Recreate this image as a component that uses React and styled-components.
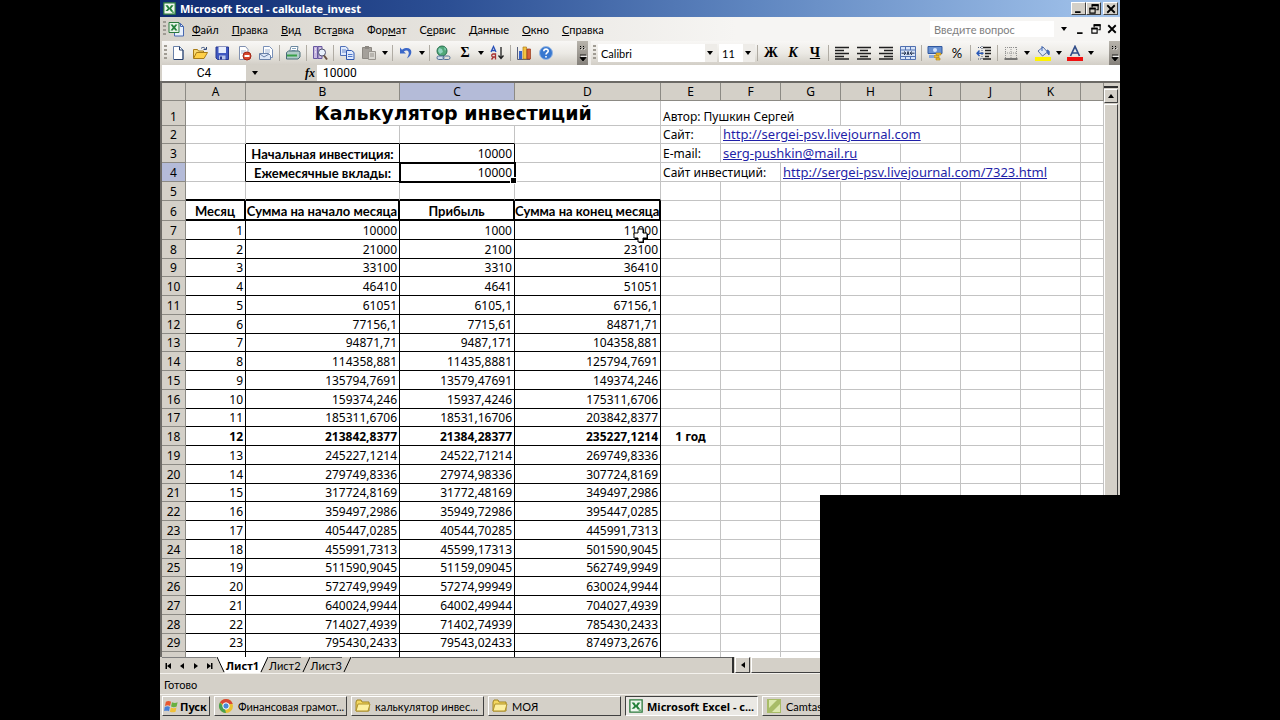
import React from 'react';
import styled, { createGlobalStyle, css } from 'styled-components';

const GlobalStyle = createGlobalStyle`
    :root {
        --face: #d4d0c8;
        --grid: #c3c3c3;
        --ui-font: Lato, 'Noto Sans', sans-serif;
        --cell-font: 'Noto Sans', 'Open Sans', sans-serif;
    }
    * {
        box-sizing: border-box;
    }
    body {
        margin: 0;
        background: #000;
        color: #000;
        font-family: var(--ui-font);
        font-size: 11px;
    }
    button,
    input,
    select {
        margin: 0;
        padding: 0;
        border: none;
        border-radius: 0;
        background: none;
        color: inherit;
        font: inherit;
    }
    svg {
        display: block;
        flex: none;
    }
`;

const raised = css`
    border: 1px solid;
    border-color: #fff #404040 #404040 #fff;
    background: var(--face);
`;

const strong = css`
    font-family: var(--cell-font);
    font-weight: bold;
`;

const Stage = styled.div`
    display: flex;
    justify-content: center;
    height: 100vh;
    overflow: hidden;
`;

const Desktop = styled.main`
    position: relative;
    display: flex;
    flex-direction: column;
    width: 75%;
    height: 100%;
    background: var(--face);
    overflow: hidden;
`;

const TitleBar = styled.header`
    display: flex;
    align-items: center;
    gap: 4px;
    height: 17px;
    padding: 0 2px 0 3px;
    background: linear-gradient(to right, #0e2a70, #2c4f94 30%, #5f86c0 62%, #a3c4ec);
    color: #fff;

    h1 {
        ${strong}
        flex: 1;
        margin: 0;
        font-size: 11px;
        white-space: nowrap;
    }
`;

const WindowButtons = styled.div`
    display: flex;

    button {
        ${raised}
        display: flex;
        align-items: center;
        justify-content: center;
        width: 15px;
        height: 13px;
    }
    button:last-child {
        margin-left: 2px;
    }
`;

const MenuBar = styled.nav`
    display: flex;
    align-items: center;
    gap: 13px;
    height: 24px;
    padding: 0 2px 0 3px;
    background: linear-gradient(to right, #d6d2ca, #f6f5f3 60%);

    & > button {
        white-space: nowrap;
    }
`;

const MenuIcon = styled.div`
    display: flex;
    align-items: center;
    gap: 2px;
    margin-right: -5px;
`;

const Handle = styled.span`
    flex: none;
    width: 3px;
    height: 16px;
    background: repeating-linear-gradient(to bottom, #a09c94 0 2px, transparent 2px 4px);
`;

const Question = styled.div`
    display: flex;
    align-items: center;
    gap: 4px;
    margin-left: auto;

    input {
        width: 124px;
        height: 16px;
        padding-left: 4px;
        background: #fff;
    }
    input::placeholder {
        color: #808080;
        opacity: 1;
    }
    button {
        display: flex;
        align-items: center;
        justify-content: center;
        width: 12px;
        height: 16px;
    }
`;

const Toolbars = styled.div`
    display: flex;
    height: 24px;
    background: linear-gradient(to right, #d6d2ca, #f6f5f3 60%);
`;

const Toolbar = styled.div`
    display: flex;
    align-items: center;
    flex: ${(props) => (props.$grow ? '1' : '0 0 426px')};
    margin-left: ${(props) => (props.$grow ? '3px' : '2px')};
    padding-left: 2px;
    background: linear-gradient(to bottom, #f8f7f5, #eceae5 50%, #d2cec6);
`;

const Tool = styled.button`
    display: flex;
    align-items: center;
    justify-content: center;
    flex: none;
    width: ${(props) => (props.$narrow ? '10px' : '22px')};
    height: 22px;
    font-family: ${(props) => (props.$serif ? "'Liberation Serif', serif" : 'inherit')};
    font-size: ${(props) => (props.$serif ? '14px' : '13px')};
    font-weight: ${(props) => (props.$serif ? 'bold' : 'normal')};
    font-style: ${(props) => (props.$italic ? 'italic' : 'normal')};
    text-decoration: ${(props) => (props.$underline ? 'underline' : 'none')};
`;

const Divider = styled.span`
    flex: none;
    width: 1px;
    height: 16px;
    margin: 0 2px;
    background: #b0aca4;
`;

const Overflow = styled.button`
    display: flex;
    align-items: center;
    justify-content: center;
    align-self: stretch;
    width: 11px;
    margin-left: auto;
    background: linear-gradient(to bottom, #b8b4ac, #84807a);
`;

const Combo = styled.label`
    display: flex;
    align-items: center;
    flex: none;
    width: ${(props) => (props.$small ? '36px' : '119px')};
    height: 18px;
    margin-left: 2px;
    padding-right: 3px;
    background: linear-gradient(to right, #fff calc(100% - 12px), #eeece8 0);

    select {
        flex: 1;
        min-width: 0;
        padding-left: 3px;
        appearance: none;
    }
`;

const FormulaBar = styled.div`
    display: flex;
    height: 18px;
    padding-left: 2px;
    border-bottom: 2px solid #6c6a66;

    input {
        background: #fff;
        font-family: Roboto, sans-serif;
        font-size: 12px;
    }
    input:first-child {
        width: 84px;
        text-align: center;
    }
    input:last-child {
        flex: 1;
        padding-left: 6px;
    }
    button {
        display: flex;
        align-items: center;
        width: 71px;
        padding: 0 2px 0 5px;
        justify-content: space-between;
    }
    i {
        font: italic bold 12px 'Liberation Serif', serif;
    }
`;

const Workspace = styled.section`
    display: flex;
    flex: 1;
    min-height: 0;
    padding-right: 2px;
    border-left: 2px solid #6c6a66;
`;

const SheetArea = styled.div`
    flex: 1;
    min-width: 0;
    overflow: hidden;
    background: #fff;
`;

const Sheet = styled.table`
    width: 100%;
    table-layout: fixed;
    border-collapse: separate;
    border-spacing: 0;
    font-family: var(--cell-font);
    font-size: 12px;
    line-height: 16px;

    col:nth-child(1) {
        width: 24px;
    }
    col:nth-child(3) {
        width: 154px;
    }
    col:nth-child(4) {
        width: 115px;
    }
    col:nth-child(5) {
        width: 146px;
    }
    col {
        width: 60px;
    }
    col:last-child {
        width: auto;
    }
`;

const Row = styled.tr`
    height: ${(props) => props.$height || 19}px;
`;

const HeadCell = styled.th`
    padding: 0;
    border-right: 1px solid #8c8a84;
    border-bottom: 1px solid #8c8a84;
    background: ${(props) => (props.$current ? '#b4bbd8' : 'var(--face)')};
    font-weight: normal;
    vertical-align: bottom;
    white-space: nowrap;
`;

const Cell = styled.td`
    position: relative;
    padding: 0 2px;
    border-right: 1px solid var(--grid);
    border-bottom: 1px solid var(--grid);
    text-align: ${(props) => props.$align || 'left'};
    vertical-align: bottom;
    font-weight: ${(props) => (props.$bold ? 'bold' : 'normal')};
    white-space: nowrap;

    ${(props) =>
        props.$lines &&
        css`
            border-right-color: ${props.$lines.includes('r') ? '#000' : 'var(--grid)'};
            border-bottom-color: ${props.$lines.includes('b') ? '#000' : 'var(--grid)'};
        `}
    ${(props) =>
        props.$heavy &&
        css`
            border-bottom: 2px solid #000;
        `}
    ${(props) =>
        props.$current &&
        css`
            z-index: 1;
            outline: 2px solid #000;
            outline-offset: -1px;

            &:after {
                content: '';
                position: absolute;
                right: -3px;
                bottom: -3px;
                width: 5px;
                height: 5px;
                border: 1px solid #fff;
                background: #000;
            }
        `}

    a {
        color: #1f1fa8;
        font-size: 13px;
    }
`;

const Title = styled(Cell)`
    font-family: 'DejaVu Sans', sans-serif;
    font-size: 19px;
    line-height: 24px;
    font-weight: bold;
    text-align: center;
`;

const LabelCell = styled(Cell)`
    padding: 0;
    font-family: Lato, 'Noto Sans', sans-serif;
    font-size: 13px;
    font-weight: bold;
    text-align: center;
`;

const HeadingCell = styled(LabelCell)`
    border-right: 2px solid #000;
    border-bottom: 2px solid #000;
`;

const Pointer = styled.svg`
    position: absolute;
    top: 6px;
    right: 10px;
    z-index: 2;
`;

const VScroll = styled.div`
    display: flex;
    flex-direction: column;
    width: 14px;
    padding-top: 3px;

    span {
        height: 3px;
        border-top: 2px solid #303030;
    }
    button {
        ${raised}
        display: flex;
        align-items: center;
        justify-content: center;
        height: 14px;
    }
    button:last-child {
        flex: 1;
        margin-top: 1px;
    }
`;

const TabStrip = styled.nav`
    display: flex;
    height: 17px;
    padding-left: 2px;
    border-bottom: 1px solid #f4f2ee;
`;

const TabNav = styled.div`
    display: flex;
    width: 54px;
    border-top: 1px solid #808080;

    button {
        display: flex;
        flex: 1;
        align-items: center;
        justify-content: center;
    }
`;

const Tab = styled.button`
    padding: 0;
    border-top: 1px solid ${(props) => (props.$active ? '#fff' : '#606060')};
    background: ${(props) => (props.$active ? '#fff' : 'var(--face)')};
    ${(props) => props.$active && strong}
`;

const TabFill = styled.div`
    flex: 1;
    border-top: 1px solid #606060;
`;

const HScroll = styled.div`
    display: flex;
    width: 388px;
    padding-left: 1px;
    border-left: 2px solid #303030;

    button {
        ${raised}
        display: flex;
        align-items: center;
        justify-content: center;
        width: 15px;
    }
    button:last-child {
        flex: 1;
        margin-left: 1px;
    }
`;

const StatusBar = styled.footer`
    display: flex;
    align-items: center;
    height: 20px;
    padding-left: 4px;
`;

const Taskbar = styled.footer`
    display: flex;
    gap: 4px;
    height: 26px;
    padding: 1px 2px 4px;
    border-top: 1px solid #f4f2ee;
`;

const TaskButton = styled.button`
    ${raised}
    display: flex;
    align-items: center;
    gap: 4px;
    flex: none;
    width: 133px;
    padding: 0 2px 0 3px;
    white-space: nowrap;

    ${(props) =>
        props.$active &&
        css`
            ${strong}
            border-color: #404040 #fff #fff #404040;
            background: #eae8e4;
        `}
`;

const StartButton = styled(TaskButton)`
    ${strong}
    width: 48px;
    padding: 0 0 0 1px;
    gap: 1px;
`;

const Camera = styled.div`
    position: absolute;
    right: 0;
    bottom: 0;
    z-index: 5;
    width: 31.25%;
    height: 31.25%;
    background: #000;
`;

const Icon = ({ size = 16, children }) => (
    <svg width={size} height={size} viewBox="0 0 16 16" fill="none" aria-hidden="true">
        {children}
    </svg>
);

const Arrow = ({ dir = 'down', bar }) => {
    const turn = { down: 0, left: 90, up: 180, right: -90 }[dir];
    return (
        <svg width="8" height="8" viewBox="0 0 8 8" aria-hidden="true">
            <g transform={`rotate(${turn} 4 4)`}>
                <path d="M1 2h6L4 6z" fill="#000" />
                {bar && <path d="M1 6h6v1.500H1z" fill="#000" />}
            </g>
        </svg>
    );
};

const More = () => (
    <svg width="9" height="22" viewBox="0 0 9 22" aria-hidden="true">
        <path d="M2 4l1.500 1.500L2 7M5 4l1.500 1.500L5 7" fill="none" stroke="#000" />
        <path d="M3 5l1.500 1.500L3 8M6 5l1.500 1.500L6 8" fill="none" stroke="#fff" strokeWidth=".5" />
        <path d="M2 13h6M2 15.500h6l-3 3.500z" fill="#000" stroke="#000" strokeWidth=".8" />
        <path d="M3 14.300h6" stroke="#fff" />
    </svg>
);

const ExcelIcon = ({ size = 13 }) => (
    <Icon size={size}>
        <path d="M1 1h14v14H1z" fill="#eef6ee" stroke="#2c7a3c" strokeWidth="1.500" />
        <path d="M3 4h3l2 3 2-3h3l-3 4 3 4h-3L8 9l-2 2H3l3-3z" fill="#23803a" />
        <path d="M11 12h3v2h-3z" fill="#66ab72" />
    </Icon>
);

const WorkbookIcon = () => (
    <Icon>
        <path d="M6.500 2.500h6l3 3v9.500h-9z" fill="#e8f0fc" stroke="#4868b0" />
        <path d="M12.500 2.500v3h3" stroke="#4868b0" />
        <path d="M1 1.500h10v10H1z" fill="#e8f4e8" stroke="#2c7a3c" />
        <path d="M2.500 3.500h2.300L6 5.200l1.200-1.700h2.300L7.200 6.500l2.300 3H7.200L6 7.800 4.800 9.500H2.500l2.300-3z" fill="#23803a" />
    </Icon>
);

const Minimize = () => (
    <Icon size={11}>
        <path d="M3 12h8v2.500H3z" fill="#000" />
    </Icon>
);

const Restore = () => (
    <Icon size={12}>
        <path d="M5.500 6V2.500h8V9H11" stroke="#000" strokeWidth="1.500" />
        <path d="M5 3h9M2 7.500h8" stroke="#000" strokeWidth="2.500" />
        <path d="M2.500 7h7v6.500h-7z" stroke="#000" strokeWidth="1.500" />
    </Icon>
);

const Close = () => (
    <Icon size={12}>
        <path d="M3 3l10 10M13 3L3 13" stroke="#000" strokeWidth="2.400" />
    </Icon>
);

const Folder = () => (
    <Icon>
        <path d="M1 4l1-2h4l1 2h7v9H1z" fill="#f4d860" stroke="#a08420" />
        <path d="M3 6h12l-2 7H1z" fill="#fdf0a0" stroke="#b0922a" />
    </Icon>
);

const icons = {
    create: (
        <Icon>
            <path d="M3.500 1.500h6l3.500 3.500v9.500H3.500z" fill="#fff" stroke="#6880a8" />
            <path d="M9.500 1.500V5H13M13 5v9.500H4" stroke="#28406c" />
        </Icon>
    ),
    open: (
        <Icon>
            <path d="M1.500 13V4.500h4l1 1.500h5v3" fill="#f8d870" stroke="#a87c18" />
            <path d="M1.500 13.500l3-6h11l-3.500 6z" fill="#ffd048" stroke="#a87c18" />
            <path d="M9 3.500c2-2 4-1 4.500 1M11.500 4.500h3V2" stroke="#304878" />
        </Icon>
    ),
    save: (
        <Icon>
            <path d="M2 2h12.500v12.500H3.500L2 13z" fill="#4058c0" stroke="#283890" />
            <path d="M4.500 2h7.500v6H4.500z" fill="#e8eefc" />
            <path d="M5 10.500h6.500v4H5z" fill="#b8c4e8" />
            <path d="M6 11.500h2v3H6z" fill="#283890" />
        </Icon>
    ),
    permission: (
        <Icon>
            <path d="M3.500 1.500h6L12 4.500v10H3.500z" fill="#fff" stroke="#8090b0" />
            <path d="M5 6h5M5 8h3" stroke="#a0b0cc" />
            <circle cx="11" cy="11" r="4" fill="#d8452c" stroke="#a02818" />
            <path d="M8.500 11h5" stroke="#fff" strokeWidth="2" />
        </Icon>
    ),
    mail: (
        <Icon>
            <path d="M5.500 1.500h6l3 3v8h-9z" fill="#fff" stroke="#7890b8" />
            <path d="M7 5h5M7 7h5" stroke="#a0b4d4" />
            <path d="M1.500 8.500h9l2 2v4h-11z" fill="#dce6f6" stroke="#6880a8" />
            <path d="M2 9l4 3 5-3" stroke="#6880a8" />
        </Icon>
    ),
    print: (
        <Icon>
            <path d="M4.500 7l1.500-5.500h7L12 7z" fill="#fff" stroke="#6c88a0" />
            <path d="M7 3.500h4M6.500 5.500h4" stroke="#88a8c0" />
            <path d="M1.500 7.500l2-1.500H14l1 1.500V12l-2 2H1.500z" fill="#b0ccc8" stroke="#486c78" />
            <path d="M2 10.500h10" stroke="#38a048" strokeWidth="2" />
        </Icon>
    ),
    research: (
        <Icon>
            <path d="M1.500 1.500h4v12h-4zM6 1.500h4v12H6z" fill="#c8b8e0" stroke="#6858a0" />
            <path d="M3 4h1M3 7h1M7.500 4h1" stroke="#fff" />
            <circle cx="10" cy="7.500" r="3.500" fill="#e8f0fc" stroke="#505070" />
            <path d="M12 10.500l3 4" stroke="#685040" strokeWidth="2" />
        </Icon>
    ),
    copy: (
        <Icon>
            <path d="M1.500 1.500h5l2.500 2v7H1.500z" fill="#e0eafc" stroke="#5070b8" />
            <path d="M3 5h4M3 7h4" stroke="#6888cc" />
            <path d="M7.500 5.500h5l2.500 2v7H7.500z" fill="#e0eafc" stroke="#3058b0" />
            <path d="M9 9.500h4.500M9 11.500h4.500" stroke="#5078c8" />
        </Icon>
    ),
    paste: (
        <Icon>
            <path d="M1.500 2.500h9v11h-9z" fill="#a4a09a" stroke="#8c8882" />
            <path d="M4 1h4v3H4z" fill="#8c8882" />
            <path d="M7.500 6.500h7v8h-7z" fill="#d8d6d0" stroke="#98948e" />
            <path d="M9 9h4M9 11h4" stroke="#98948e" />
        </Icon>
    ),
    undo: (
        <Icon>
            <path d="M2 2.500v6h6L5.800 6.500c3-2.500 6-.5 4.700 3.500L9 13.500c6-3.500 6-11-1-10.500-2 .2-3.200 1-4 1.700z" fill="#3c68c8" />
        </Icon>
    ),
    link: (
        <Icon>
            <circle cx="7" cy="6" r="5" fill="#50a878" stroke="#287050" />
            <path d="M4 3l3 1 1 3-3 2-2-3zM9 2l2 2-1 2z" fill="#90d4c0" />
            <rect x="2" y="11" width="7" height="3.500" rx="1.700" fill="#d0dcec" stroke="#507098" />
            <rect x="8" y="11" width="7" height="3.500" rx="1.700" stroke="#507098" />
        </Icon>
    ),
    sort: (
        <Icon>
            <path d="M2 7l2.500-5.500L7 7M3 5.500h3" stroke="#2850b8" strokeWidth="1.300" />
            <path d="M6.500 14.500v-5.500H4.200c-2 0-2 3 0 3h2.300M4.500 12l-2 2.500" stroke="#a83030" strokeWidth="1.300" />
            <path d="M12 2v11M9.500 10.500L12 13.500l2.500-3" stroke="#202020" strokeWidth="1.300" />
        </Icon>
    ),
    chart: (
        <Icon>
            <path d="M1.500 2v12.500H14" stroke="#58607c" />
            <path d="M3 6h3v8H3z" fill="#3864c8" />
            <path d="M7 2h3.500v12H7z" fill="#f4c440" stroke="#b07818" strokeWidth=".7" />
            <path d="M11 4h3.500v10H11z" fill="#d86038" stroke="#983818" strokeWidth=".7" />
        </Icon>
    ),
    help: (
        <Icon>
            <circle cx="8" cy="8" r="6.500" fill="#3878d0" stroke="#98b8e4" />
            <path d="M5.800 6.300c0-3 4.600-2.800 4.400-.2C10.100 7.600 8 7.700 8 9.500M8 11v1.600" stroke="#fff" strokeWidth="1.600" />
        </Icon>
    ),
    left: (
        <Icon>
            <path d="M1 2.500h14M1 5.500h9M1 8.500h14M1 11.500h9M1 14h14" stroke="#202020" strokeWidth="1.400" />
        </Icon>
    ),
    center: (
        <Icon>
            <path d="M1 2.500h14M4 5.500h8M1 8.500h14M4 11.500h8M1 14h14" stroke="#202020" strokeWidth="1.400" />
        </Icon>
    ),
    right: (
        <Icon>
            <path d="M1 2.500h14M6 5.500h9M1 8.500h14M6 11.500h9M1 14h14" stroke="#202020" strokeWidth="1.400" />
        </Icon>
    ),
    merge: (
        <Icon>
            <path d="M.5 1.500h15v13H.5zM.5 5h15M.5 11.500h15M5.500 1.500V5M10.500 1.500V5M5.500 11.500v3M10.500 11.500v3" fill="#d8e4f8" stroke="#5070b0" />
            <path d="M1.500 8.200h4M10.500 8.200h4M4 6.500l2 1.700-2 1.700M12 6.500l-2 1.700 2 1.700" stroke="#203050" />
            <path d="M7 10l1-3.500L9 10" stroke="#203050" />
        </Icon>
    ),
    currency: (
        <Icon>
            <path d="M1 1.500h14v7H1z" fill="#6890d0" stroke="#3058a0" />
            <circle cx="8" cy="5" r="2" fill="#d4e4fc" />
            <path d="M9 8h5v2H9zM7 10.500h5v2H7zM9 13h4v2H9z" fill="#f0c030" stroke="#b08010" strokeWidth=".6" />
            <path d="M2 10h5v3H2z" fill="#88a8dc" />
        </Icon>
    ),
    indent: (
        <Icon>
            <path d="M7 2.500h8M9 5.500h6M9 8.500h6M9 11.500h4M7 14h8" stroke="#202020" strokeWidth="1.500" />
            <path d="M7.500 8.200H1M3.500 5.500L1 8.200l2.500 2.700" stroke="#2858b8" strokeWidth="1.400" />
            <path d="M2 2.500h3M2 14h3M6 1v14" stroke="#405070" strokeDasharray="1 1" />
        </Icon>
    ),
    borders: (
        <Icon>
            <path d="M2 2.500h12M2 8h12M2.500 2v12M8 2v12M13.500 2v12" stroke="#909090" strokeDasharray="1 1" />
            <path d="M1.500 14h13" stroke="#505050" strokeWidth="1.500" />
        </Icon>
    ),
    fill: (
        <Icon>
            <path d="M3 6l5-4 4.500 5-5 4z" fill="#dce6f8" stroke="#5870a0" />
            <path d="M7 1v5M12 5c3 .5 2.500 3 2 5-1.500-1-2-3-2-5" fill="#4068b8" stroke="#4068b8" />
            <path d="M0 12h16v4H0z" fill="#fff200" />
        </Icon>
    ),
    fontColor: (
        <Icon>
            <path d="M3.500 11L8 1.500l4.500 9.500M5 8h6" stroke="#304c88" strokeWidth="1.700" />
            <path d="M0 12h16v4H0z" fill="#f01010" />
        </Icon>
    ),
    windows: (
        <Icon size={15}>
            <path d="M2 3c2-1.500 4-1 5.500 0L6.500 7.500C5 6.500 3 6.500 1 7.500z" fill="#e85830" />
            <path d="M8.500 3.500c2 1 4 1 6 0l-1 4.500c-2 1-4 1-6 0z" fill="#68b040" />
            <path d="M.8 8.500c2-1 4-1 5.500 0l-1 4.500C4 12-.5 12.500 0 13z" fill="#4880d8" />
            <path d="M7.300 9c2 1 4 1 6 0l-1 4.500c-2 1-4 1-6 0z" fill="#f0c038" />
        </Icon>
    ),
    chrome: (
        <Icon>
            <circle cx="8" cy="8" r="7" fill="#e8c030" />
            <path d="M8 8L1.900 4.500A7 7 0 0114.700 6H8z" fill="#d84838" />
            <path d="M1.900 4.500L6.500 9.500 8 15A7 7 0 011.900 4.500z" fill="#48a050" />
            <circle cx="8" cy="8" r="3.200" fill="#4888d8" stroke="#fff" />
        </Icon>
    ),
    camtasia: (
        <Icon>
            <path d="M1 1h14v14H1z" fill="#a8bc68" />
            <path d="M3 2h8L3 10zM14 6v8H6z" fill="#dce8b0" />
        </Icon>
    ),
};

const menu = [
    ['', 'Ф', 'айл'],
    ['', 'П', 'равка'],
    ['', 'В', 'ид'],
    ['Вст', 'а', 'вка'],
    ['Фор', 'м', 'ат'],
    ['С', 'е', 'рвис'],
    ['', 'Д', 'анные'],
    ['', 'О', 'кно'],
    ['', 'С', 'правка'],
];

const standardTools = [
    ['create', 'Создать'],
    ['open', 'Открыть'],
    ['save', 'Сохранить'],
    ['permission', 'Разрешения'],
    ['mail', 'Сообщение'],
    '|',
    ['print', 'Печать'],
    '|',
    ['research', 'Справочные материалы'],
    '|',
    ['copy', 'Копировать'],
    ['paste', 'Вставить'],
    'v',
    '|',
    ['undo', 'Отменить'],
    'v',
    '|',
    ['link', 'Гиперссылка'],
    ['Σ', 'Автосумма'],
    'v',
    ['sort', 'Сортировка'],
    '|',
    ['chart', 'Мастер диаграмм'],
    ['help', 'Помощь'],
];

const formatTools = [
    '|',
    ['Ж', 'Полужирный'],
    ['К', 'Курсив'],
    ['Ч', 'Подчеркнутый'],
    '|',
    ['left', 'По левому краю'],
    ['center', 'По центру'],
    ['right', 'По правому краю'],
    ['merge', 'Объединить'],
    '|',
    ['currency', 'Денежный формат'],
    ['%', 'Процентный формат'],
    '|',
    ['indent', 'Уменьшить отступ'],
    '|',
    ['borders', 'Границы'],
    'v',
    ['fill', 'Цвет заливки'],
    'v',
    ['fontColor', 'Цвет шрифта'],
    'v',
];

const columns = 'ABCDEFGHIJKL'.split('');

const months = [
    ['10000', '1000', '11000'],
    ['21000', '2100', '23100'],
    ['33100', '3310', '36410'],
    ['46410', '4641', '51051'],
    ['61051', '6105,1', '67156,1'],
    ['77156,1', '7715,61', '84871,71'],
    ['94871,71', '9487,171', '104358,881'],
    ['114358,881', '11435,8881', '125794,7691'],
    ['135794,7691', '13579,47691', '149374,246'],
    ['159374,246', '15937,4246', '175311,6706'],
    ['185311,6706', '18531,16706', '203842,8377'],
    ['213842,8377', '21384,28377', '235227,1214'],
    ['245227,1214', '24522,71214', '269749,8336'],
    ['279749,8336', '27974,98336', '307724,8169'],
    ['317724,8169', '31772,48169', '349497,2986'],
    ['359497,2986', '35949,72986', '395447,0285'],
    ['405447,0285', '40544,70285', '445991,7313'],
    ['455991,7313', '45599,17313', '501590,9045'],
    ['511590,9045', '51159,09045', '562749,9949'],
    ['572749,9949', '57274,99949', '630024,9944'],
    ['640024,9944', '64002,49944', '704027,4939'],
    ['714027,4939', '71402,74939', '785430,2433'],
    ['795430,2433', '79543,02433', '874973,2676'],
];

const Tools = ({ items }) =>
    items.map((item, i) => {
        if (item === '|') return <Divider key={i} />;
        if (item === 'v')
            return (
                <Tool key={i} $narrow aria-label="Еще">
                    <Arrow />
                </Tool>
            );
        const [name, label] = item;
        return (
            <Tool
                key={i}
                aria-label={label}
                $serif={'ЖКЧΣ'.includes(name)}
                $italic={name === 'К'}
                $underline={name === 'Ч'}
            >
                {icons[name] || name}
            </Tool>
        );
    });

const Blank = ({ count }) => Array.from({ length: count }, (_, i) => <Cell key={i} />);

const MonthRow = ({ index, values }) => {
    const row = index + 7;
    const bold = index === 11;
    return (
        <Row $height={row % 4 === 1 ? 18 : 19}>
            <HeadCell scope="row">{row}</HeadCell>
            <Cell $align="right" $bold={bold} $lines="rb">
                {index + 1}
            </Cell>
            {values.map((value, i) => (
                <Cell key={i} $align="right" $bold={bold} $lines="rb">
                    {value}
                    {index === 0 && i === 2 && (
                        <Pointer width="18" height="18" viewBox="0 0 18 18" aria-hidden="true">
                            <path d="M7 3h5v4h4v5h-4v4H7v-4H3V7h4z" fill="#000" />
                            <path d="M6 2h5v4h4v5h-4v4H6v-4H2V6h4z" fill="#fff" stroke="#000" />
                        </Pointer>
                    )}
                </Cell>
            ))}
            <Cell $align="center" $bold>
                {bold && '1 год'}
            </Cell>
            <Blank count={7} />
        </Row>
    );
};

const Slant = ({ back, before, after }) => (
    <svg width="10" height="16" viewBox="0 0 10 16" aria-hidden="true">
        <path d={back ? 'M0 0h10v16H9z' : 'M0 0h9L1 16H0z'} fill={back ? after : before} />
        <path d={back ? 'M1 0l7 15' : 'M9 0L2 15'} stroke="#000" />
    </svg>
);

export default function App() {
    return (
        <Stage>
            <GlobalStyle />
            <Desktop>
                <TitleBar>
                    <ExcelIcon />
                    <h1>Microsoft Excel - calkulate_invest</h1>
                    <WindowButtons>
                        <button aria-label="Свернуть">
                            <Minimize />
                        </button>
                        <button aria-label="Восстановить">
                            <Restore />
                        </button>
                        <button aria-label="Закрыть">
                            <Close />
                        </button>
                    </WindowButtons>
                </TitleBar>

                <MenuBar>
                    <MenuIcon>
                        <Handle />
                        <WorkbookIcon />
                    </MenuIcon>
                    {menu.map(([before, key, after]) => (
                        <button key={before + key + after}>
                            {before}
                            <u>{key}</u>
                            {after}
                        </button>
                    ))}
                    <Question>
                        <input placeholder="Введите вопрос" aria-label="Введите вопрос" />
                        <button aria-label="Список вопросов">
                            <Arrow />
                        </button>
                        <button aria-label="Свернуть книгу">
                            <Minimize />
                        </button>
                        <button aria-label="Восстановить книгу">
                            <Restore />
                        </button>
                        <button aria-label="Закрыть книгу">
                            <Close />
                        </button>
                    </Question>
                </MenuBar>

                <Toolbars>
                    <Toolbar>
                        <Handle />
                        <Tools items={standardTools} />
                        <Overflow aria-label="Параметры панели">
                            <More />
                        </Overflow>
                    </Toolbar>
                    <Toolbar $grow>
                        <Handle />
                        <Combo>
                            <select aria-label="Шрифт">
                                <option>Calibri</option>
                            </select>
                            <Arrow />
                        </Combo>
                        <Combo $small>
                            <select aria-label="Размер">
                                <option>11</option>
                            </select>
                            <Arrow />
                        </Combo>
                        <Tools items={formatTools} />
                        <Overflow aria-label="Параметры панели">
                            <More />
                        </Overflow>
                    </Toolbar>
                </Toolbars>

                <FormulaBar>
                    <input defaultValue="C4" aria-label="Имя" />
                    <button aria-label="Вставка функции">
                        <Arrow />
                        <i>fx</i>
                    </button>
                    <input defaultValue="10000" aria-label="Строка формул" />
                </FormulaBar>

                <Workspace>
                    <SheetArea>
                        <Sheet>
                            <colgroup>
                                <col />
                                {columns.map((name) => (
                                    <col key={name} />
                                ))}
                            </colgroup>
                            <thead>
                                <Row $height={18}>
                                    <HeadCell />
                                    {columns.map((name) => (
                                        <HeadCell key={name} scope="col" $current={name === 'C'}>
                                            {name !== 'L' && name}
                                        </HeadCell>
                                    ))}
                                </Row>
                            </thead>
                            <tbody>
                                <Row $height={25}>
                                    <HeadCell scope="row">1</HeadCell>
                                    <Cell />
                                    <Title colSpan={3}>Калькулятор инвестиций</Title>
                                    <Cell colSpan={3}>Автор: Пушкин Сергей</Cell>
                                    <Blank count={5} />
                                </Row>
                                <Row $height={18}>
                                    <HeadCell scope="row">2</HeadCell>
                                    <Cell />
                                    <Cell $lines="b" />
                                    <Cell $lines="b" />
                                    <Cell />
                                    <Cell>Сайт:</Cell>
                                    <Cell colSpan={4}>
                                        <a href="http://sergei-psv.livejournal.com">http://sergei-psv.livejournal.com</a>
                                    </Cell>
                                    <Blank count={3} />
                                </Row>
                                <Row>
                                    <HeadCell scope="row">3</HeadCell>
                                    <Cell $lines="r" />
                                    <LabelCell $lines="rb">Начальная инвестиция:</LabelCell>
                                    <Cell $align="right" $lines="rb">
                                        10000
                                    </Cell>
                                    <Cell />
                                    <Cell>E-mail:</Cell>
                                    <Cell colSpan={3}>
                                        <a href="mailto:serg-pushkin@mail.ru">serg-pushkin@mail.ru</a>
                                    </Cell>
                                    <Blank count={4} />
                                </Row>
                                <Row>
                                    <HeadCell scope="row" $current>
                                        4
                                    </HeadCell>
                                    <Cell $lines="r" />
                                    <LabelCell $lines="rb">Ежемесячные вклады:</LabelCell>
                                    <Cell $align="right" $lines="rb" $current>
                                        10000
                                    </Cell>
                                    <Cell />
                                    <Cell colSpan={2}>Сайт инвестиций:</Cell>
                                    <Cell colSpan={5}>
                                        <a href="http://sergei-psv.livejournal.com/7323.html">
                                            http://sergei-psv.livejournal.com/7323.html
                                        </a>
                                    </Cell>
                                    <Blank count={1} />
                                </Row>
                                <Row>
                                    <HeadCell scope="row">5</HeadCell>
                                    <Cell $heavy />
                                    <Cell $heavy />
                                    <Cell $heavy />
                                    <Cell $heavy />
                                    <Blank count={8} />
                                </Row>
                                <Row $height={20}>
                                    <HeadCell scope="row">6</HeadCell>
                                    <HeadingCell>Месяц</HeadingCell>
                                    <HeadingCell>Сумма на начало месяца</HeadingCell>
                                    <HeadingCell>Прибыль</HeadingCell>
                                    <HeadingCell>Сумма на конец месяца</HeadingCell>
                                    <Blank count={8} />
                                </Row>
                                {months.map((values, i) => (
                                    <MonthRow key={i} index={i} values={values} />
                                ))}
                                <Row>
                                    <HeadCell />
                                    <Cell $lines="rb" />
                                    <Cell $lines="rb" />
                                    <Cell $lines="rb" />
                                    <Cell $lines="rb" />
                                    <Blank count={8} />
                                </Row>
                            </tbody>
                        </Sheet>
                    </SheetArea>
                    <VScroll>
                        <span />
                        <button aria-label="Вверх">
                            <Arrow dir="up" />
                        </button>
                        <button aria-label="Ползунок" />
                    </VScroll>
                </Workspace>

                <TabStrip>
                    <TabNav>
                        <button aria-label="Первый лист">
                            <Arrow dir="left" bar />
                        </button>
                        <button aria-label="Предыдущий лист">
                            <Arrow dir="left" />
                        </button>
                        <button aria-label="Следующий лист">
                            <Arrow dir="right" />
                        </button>
                        <button aria-label="Последний лист">
                            <Arrow dir="right" bar />
                        </button>
                    </TabNav>
                    <Slant back after="#fff" />
                    <Tab $active>Лист1</Tab>
                    <Slant before="#fff" />
                    <Tab>Лист2</Tab>
                    <Slant before="#d4d0c8" />
                    <Tab>Лист3</Tab>
                    <Slant before="#d4d0c8" />
                    <TabFill />
                    <HScroll>
                        <button aria-label="Влево">
                            <Arrow dir="left" />
                        </button>
                        <button aria-label="Ползунок" />
                    </HScroll>
                </TabStrip>

                <StatusBar>Готово</StatusBar>

                <Taskbar>
                    <StartButton>
                        {icons.windows}
                        <span>Пуск</span>
                    </StartButton>
                    <TaskButton>
                        {icons.chrome}
                        <span>Финансовая грамот...</span>
                    </TaskButton>
                    <TaskButton>
                        <Folder />
                        <span>калькулятор инвес...</span>
                    </TaskButton>
                    <TaskButton>
                        <Folder />
                        <span>МОЯ</span>
                    </TaskButton>
                    <TaskButton $active>
                        <ExcelIcon size={14} />
                        <span>Microsoft Excel - c...</span>
                    </TaskButton>
                    <TaskButton>
                        {icons.camtasia}
                        <span>Camtasia</span>
                    </TaskButton>
                </Taskbar>
                <Camera />
            </Desktop>
        </Stage>
    );
}
